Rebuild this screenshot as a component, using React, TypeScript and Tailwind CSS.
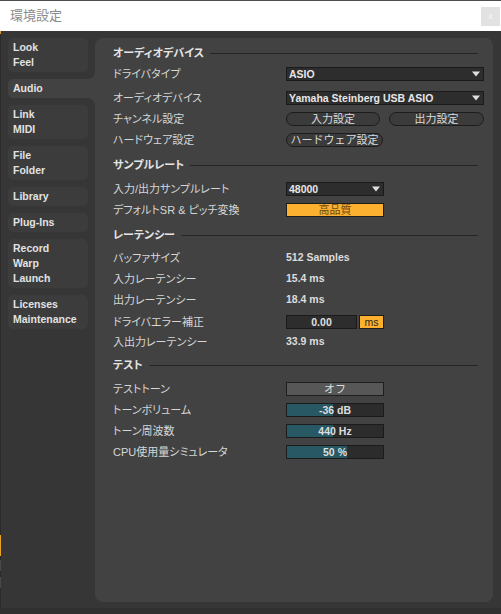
import type { ReactNode } from "react";

const jp = "font-['Liberation_Sans','Noto_Sans_CJK_JP',sans-serif]";

const tabs = [
  { id: "look", lines: ["Look", "Feel"] },
  { id: "audio", lines: ["Audio"] },
  { id: "link", lines: ["Link", "MIDI"] },
  { id: "file", lines: ["File", "Folder"] },
  { id: "library", lines: ["Library"] },
  { id: "plugins", lines: ["Plug-Ins"] },
  { id: "record", lines: ["Record", "Warp", "Launch"] },
  { id: "licenses", lines: ["Licenses", "Maintenance"] }
];

function Tab({ lines, active }: { lines: string[]; active?: boolean }) {
  if (active) {
    return (
      <div className="relative flex w-[87px] flex-col rounded-l-[5px] bg-[#424242] px-[5px] py-[2px]">
        <span className="absolute -top-[7px] right-0 h-[7px] w-[7px] bg-[radial-gradient(circle_at_0_0,transparent_6.5px,#424242_7px)]" />
        <span className="absolute -bottom-[7px] right-0 h-[7px] w-[7px] bg-[radial-gradient(circle_at_0_100%,transparent_6.5px,#424242_7px)]" />
        {lines.map((line) => (
          <span key={line} className="h-[15px] text-[10.5px] font-bold leading-[15px] text-[#e2e2e2]">
            {line}
          </span>
        ))}
      </div>
    );
  }
  return (
    <div className="flex w-[80px] flex-col rounded-[5px] bg-[#3c3c3c] px-[5px] py-[2px]">
      {lines.map((line) => (
        <span key={line} className="h-[15px] text-[10.5px] font-bold leading-[15px] text-[#e2e2e2]">
          {line}
        </span>
      ))}
    </div>
  );
}

function Header({ title, className = "" }: { title: string; className?: string }) {
  return (
    <div className={`flex h-[20px] items-center gap-[6px] pr-[6px] ${className}`}>
      <span className="text-[11px] font-bold text-[#e4e4e4] [font-feature-settings:'palt']">{title}</span>
      <div className="h-px flex-1 bg-[#262626]" />
    </div>
  );
}

function Row({ label, children, className = "" }: { label: string; children?: ReactNode; className?: string }) {
  return (
    <div className={`flex h-[20px] items-center ${className}`}>
      <span className="w-[173px] text-[11px] text-[#d6d6d6] [font-feature-settings:'palt']">{label}</span>
      {children}
    </div>
  );
}

function Dropdown({ value, wide }: { value: string; wide?: boolean }) {
  return (
    <div
      className={`flex h-[14px] items-center justify-between border border-[#1b1b1b] bg-[#2d2d2d] pl-[2px] pr-[3px] ${
        wide ? "w-[198px]" : "w-[98px]"
      }`}
    >
      <span className="text-[10.5px] font-bold leading-none text-[#e6e6e6]">{value}</span>
      <svg width="8" height="6" viewBox="0 0 8 6">
        <path d="M0 0.5h8L4 5.5z" fill="#e0e0e0" />
      </svg>
    </div>
  );
}

function Pill({ label, width }: { label: string; width: string }) {
  return (
    <div
      className={`flex h-[14px] items-center justify-center rounded-full border border-[#1d1d1d] bg-[#3b3b3b] text-[11px] leading-none text-[#dadada] ${width}`}
    >
      {label}
    </div>
  );
}

function Value({ text }: { text: string }) {
  return <span className="text-[10.5px] font-bold text-[#dcdcdc]">{text}</span>;
}

function Meter({ text, fill }: { text: string; fill: number }) {
  return (
    <div
      className="flex h-[14px] w-[98px] items-center justify-center border border-[#1b1b1b]"
      style={{ background: `linear-gradient(to right, #285864 ${fill}px, #2c2c2c ${fill}px)` }}
    >
      <span className="text-[10.5px] font-bold leading-none text-[#dedede]">{text}</span>
    </div>
  );
}

export default function App() {
  return (
    <div className={`flex h-[614px] w-[501px] flex-col overflow-hidden bg-[#363636] ${jp}`}>
      <div className="h-px bg-[#4e4e4e]" />
      <div className="flex h-[30px] items-center justify-between bg-white pl-[10px] pr-[1px]">
        <span className="text-[13px] text-[#8a8a8a]">環境設定</span>
        <div className="flex h-[19px] w-[19px] items-center justify-center bg-[#e2e2e2] text-[9px] leading-none text-[#f6f6f6]">
          x
        </div>
      </div>

      <div className="flex flex-1">
        <div className="flex w-px flex-col bg-[#2a2a2a]">
          <div className="h-[3px] bg-[#d99a2a]" />
          <div className="flex-1" />
          <div className="h-[21px] bg-[#e8a224]" />
          <div className="h-[4px]" />
          <div className="h-[11px] bg-[#4a4a4a]" />
          <div className="h-[6px]" />
          <div className="h-[11px] bg-[#4a4a4a]" />
          <div className="h-[20px]" />
        </div>

        <div className="flex w-[94px] flex-col gap-[7px] pl-[7px] pt-[7px]">
          {tabs.map((tab) => (
            <Tab key={tab.id} lines={tab.lines} active={tab.id === "audio"} />
          ))}
        </div>

        <div className="mb-[6px] mt-[7px] flex w-[398px] flex-col rounded-[8px] bg-[#424242] pl-[18px] pr-[9px] pt-[5px]">
          <Header title="オーディオデバイス" />
          <Row label="ドライバタイプ" className="mt-px">
            <Dropdown value="ASIO" wide />
          </Row>
          <Row label="オーディオデバイス" className="mt-[4px]">
            <Dropdown value="Yamaha Steinberg USB ASIO" wide />
          </Row>
          <Row label="チャンネル設定" className="mt-px">
            <div className="flex gap-[9px]">
              <Pill label="入力設定" width="w-[94px]" />
              <Pill label="出力設定" width="w-[95px]" />
            </div>
          </Row>
          <Row label="ハードウェア設定" className="mt-px">
            <Pill label="ハードウェア設定" width="w-[97px]" />
          </Row>

          <Header title="サンプルレート" className="mt-[5px]" />
          <Row label="入力/出力サンプルレート" className="mt-[4px]">
            <Dropdown value="48000" />
          </Row>
          <Row label="デフォルトSR & ピッチ変換" className="mt-px">
            <div className="flex h-[14px] w-[98px] items-center justify-center border border-[#1e1e1e] bg-[#fbb02f] text-[11px] leading-none text-[#6d4a14]">
              高品質
            </div>
          </Row>

          <Header title="レーテンシー" className="mt-[5px]" />
          <Row label="バッファサイズ" className="mt-[3px]">
            <Value text="512 Samples" />
          </Row>
          <Row label="入力レーテンシー" className="mt-px">
            <Value text="15.4 ms" />
          </Row>
          <Row label="出力レーテンシー" className="mt-px">
            <Value text="18.4 ms" />
          </Row>
          <Row label="ドライバエラー補正" className="mt-[2px]">
            <div className="flex gap-[2px]">
              <div className="flex h-[14px] w-[71px] items-center justify-center border border-[#1b1b1b] bg-[#2d2d2d] text-[10.5px] font-bold leading-none text-[#e0e0e0]">
                0.00
              </div>
              <div className="flex h-[14px] w-[25px] items-center justify-center border border-[#1e1e1e] bg-[#fbb02f] text-[10.5px] leading-none text-[#2e2a22]">
                ms
              </div>
            </div>
          </Row>
          <Row label="入出力レーテンシー">
            <Value text="33.9 ms" />
          </Row>

          <Header title="テスト" className="mt-[3px]" />
          <Row label="テストトーン" className="mt-[4px]">
            <div className="flex h-[14px] w-[98px] items-center justify-center border border-[#1e1e1e] bg-[#575757] text-[11px] leading-none text-[#dcdcdc]">
              オフ
            </div>
          </Row>
          <Row label="トーンボリューム" className="mt-px">
            <Meter text="-36 dB" fill={46} />
          </Row>
          <Row label="トーン周波数" className="mt-px">
            <Meter text="440 Hz" fill={46} />
          </Row>
          <Row label="CPU使用量シミュレータ" className="mt-px">
            <Meter text="50 %" fill={60} />
          </Row>
        </div>
      </div>
      <div className="h-[6px] bg-[#303030]" />
    </div>
  );
}
